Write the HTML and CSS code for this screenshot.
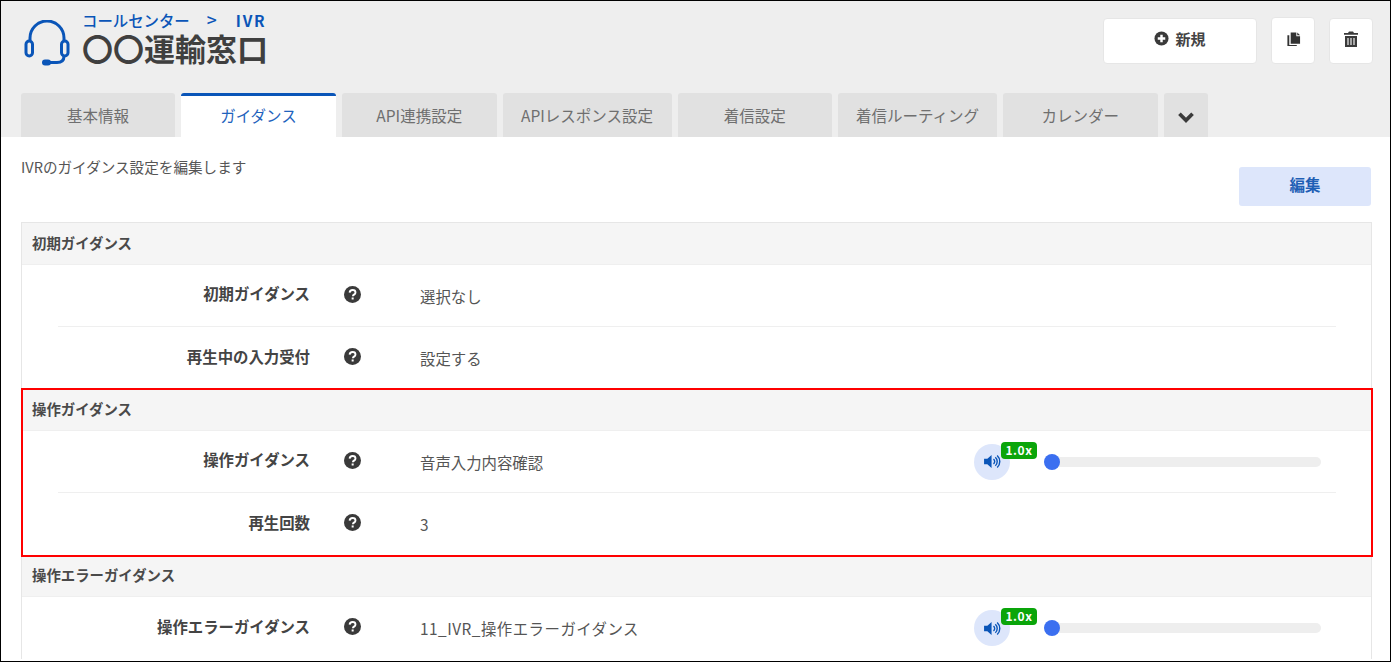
FILE: index.html
```html
<!DOCTYPE html>
<html lang="ja">
<head>
<meta charset="utf-8">
<title>IVR</title>
<link rel="stylesheet" href="styles.css">
</head>
<body>
<div class="frame">
  <header class="top">
    <div class="top-row">
      <div class="brand">
        <svg class="headset" viewBox="0 0 46 46" width="46" height="46" fill="none" stroke="#0a55b8" stroke-width="3">
          <path d="M6 20V18a17 17 0 0 1 34 0v2"/>
          <rect x="2" y="21" width="6.500" height="15" rx="3.200"/>
          <rect x="37.500" y="21" width="6.500" height="15" rx="3.200"/>
          <path d="M40 36c0 5-3 6.500-7 6.500H24"/>
          <rect x="18" y="39.500" width="9" height="6" rx="3" fill="#0a55b8" stroke="none"/>
        </svg>
        <div class="titles">
          <div class="crumb"><span>コールセンター</span><span class="sep">&gt;</span><span class="ivr">IVR</span></div>
          <h1 class="title">〇〇運輸窓口</h1>
        </div>
      </div>
      <div class="actions">
        <button class="btn btn-new">
          <svg viewBox="0 0 16 16" width="15" height="15"><circle cx="8" cy="8" r="7.500" fill="#3a3a3a"/><path d="M8 4v8M4 8h8" stroke="#fff" stroke-width="2.600"/></svg>
          <span>新規</span>
        </button>
        <button class="btn btn-icon btn-copy">
          <svg viewBox="0 0 16 16" width="15" height="16"><path d="M5 1h6v4h4v8H5z" fill="#333"/><path d="M12 1l3 3h-3z" fill="#333"/><path d="M1.500 4H3.500V14.500H11.500V15.500H1.500z" fill="#333"/></svg>
        </button>
        <button class="btn btn-icon">
          <svg viewBox="0 0 14 16" width="14" height="16"><path d="M5 .5h4l1 1.500h4v1.700H0V2h4z" fill="#3a3a3a"/><path d="M1 5h12v11H1z" fill="#3a3a3a"/><path d="M4 7v7M7 7v7M10 7v7" stroke="#eee" stroke-width="1.200"/></svg>
        </button>
      </div>
    </div>
    <nav class="tabs">
      <a class="tab tab-first">基本情報</a>
      <a class="tab active">ガイダンス</a>
      <a class="tab">API連携設定</a>
      <a class="tab tab-wide">APIレスポンス設定</a>
      <a class="tab">着信設定</a>
      <a class="tab tab-route">着信ルーティング</a>
      <a class="tab">カレンダー</a>
      <a class="tab tab-more">
        <svg viewBox="0 0 16 11" width="18" height="12"><path d="M2 2.500l6 6 6-6" fill="none" stroke="#3a3a3a" stroke-width="3.400"/></svg>
      </a>
    </nav>
  </header>

  <main class="content">
    <div class="lead">
      <p class="lead-text">IVRのガイダンス設定を編集します</p>
      <button class="btn-edit">編集</button>
    </div>

    <div class="card">
      <section class="section">
        <h2 class="section-head">初期ガイダンス</h2>
        <div class="row">
          <div class="label">初期ガイダンス</div>
          <div class="help"><svg viewBox="0 0 16 16" width="17" height="17"><use href="#q"/></svg></div>
          <div class="value">選択なし</div>
        </div>
        <div class="row">
          <div class="label">再生中の入力受付</div>
          <div class="help"><svg viewBox="0 0 16 16" width="17" height="17"><use href="#q"/></svg></div>
          <div class="value">設定する</div>
        </div>
      </section>

      <section class="section">
        <h2 class="section-head">操作ガイダンス</h2>
        <div class="row">
          <div class="label">操作ガイダンス</div>
          <div class="help"><svg viewBox="0 0 16 16" width="17" height="17"><use href="#q"/></svg></div>
          <div class="value">音声入力内容確認</div>
          <div class="player">
            <div class="speaker">
              <svg viewBox="0 0 18 16" width="17" height="15"><path d="M0 5h3.500L8 1v14l-4.500-4H0z" fill="#0a55b8"/><path d="M10 5.500a3 3 0 0 1 0 5M12 3.500a6 6 0 0 1 0 9M14 1.500a9 9 0 0 1 0 13" fill="none" stroke="#0a55b8" stroke-width="1.500"/></svg>
              <span class="speed">1.0x</span>
            </div>
            <div class="track"><span class="knob"></span></div>
          </div>
        </div>
        <div class="row">
          <div class="label">再生回数</div>
          <div class="help"><svg viewBox="0 0 16 16" width="17" height="17"><use href="#q"/></svg></div>
          <div class="value">3</div>
        </div>
      </section>

      <section class="section">
        <h2 class="section-head">操作エラーガイダンス</h2>
        <div class="row">
          <div class="label">操作エラーガイダンス</div>
          <div class="help"><svg viewBox="0 0 16 16" width="17" height="17"><use href="#q"/></svg></div>
          <div class="value value-long">11_IVR_操作エラーガイダンス</div>
          <div class="player">
            <div class="speaker">
              <svg viewBox="0 0 18 16" width="17" height="15"><path d="M0 5h3.500L8 1v14l-4.500-4H0z" fill="#0a55b8"/><path d="M10 5.500a3 3 0 0 1 0 5M12 3.500a6 6 0 0 1 0 9M14 1.500a9 9 0 0 1 0 13" fill="none" stroke="#0a55b8" stroke-width="1.500"/></svg>
              <span class="speed">1.0x</span>
            </div>
            <div class="track"><span class="knob"></span></div>
          </div>
        </div>
      </section>
    </div>
  </main>

  <div class="highlight"></div>

  <svg class="defs" width="0" height="0">
    <symbol id="q" viewBox="0 0 16 16">
      <circle cx="8" cy="8" r="8" fill="#3a3a3a"/>
      <path d="M5.300 6.200C5.400 4.600 6.500 3.700 8.100 3.700c1.600 0 2.700 1 2.700 2.300 0 1.100-.6 1.600-1.400 2.100-.7.500-1 .8-1 1.500" fill="none" stroke="#fff" stroke-width="1.800"/>
      <rect x="7.200" y="10.800" width="1.900" height="1.900" fill="#fff"/>
    </symbol>
  </svg>
</div>
</body>
</html>
```

FILE: styles.css
```css
* { box-sizing: border-box; }
html, body { margin: 0; padding: 0; background: #fff; }
body {
  font-family: "Noto Sans CJK JP", "Noto Sans", sans-serif;
  color: #444;
  overflow: hidden;
}
.frame {
  position: relative;
  width: 1391px;
  height: 662px;
  border: 1px solid #000;
  overflow: hidden;
}
.defs { position: absolute; }

.top { background: #eee; height: 136px; padding: 0 17px 0 20px; display: flex; flex-direction: column; }
.top-row { display: flex; justify-content: space-between; height: 92px; }
.brand { display: flex; align-items: flex-start; gap: 12px; padding-top: 19px; padding-left: 3px; }
.titles { margin-top: -11px; }
.crumb { display: flex; font-size: 15.400px; line-height: 22px; font-weight: 500; color: #0a55b8; height: 20px; }
.sep { margin: 0 19px 0 17px; font-size: 17.500px; }
.ivr { font-weight: 700; font-size: 15.500px; letter-spacing: 1.800px; }
.title {
  margin: 2px 0 0; font-family: "Liberation Sans", "Noto Sans CJK JP", sans-serif;
  font-size: 31px; line-height: 40px; font-weight: 700; color: #3f3f3f; white-space: nowrap;
}

.actions { display: flex; gap: 14px; padding-top: 17px; align-items: flex-start; }
.btn {
  display: flex; align-items: center; justify-content: center; gap: 6px;
  height: 46px; background: #fff; border: 1px solid #e6e6e6; border-radius: 4px;
  font: 700 15px "Noto Sans CJK JP", sans-serif; color: #444; padding: 0 0 4px;
}
.btn-new { width: 154px; padding-bottom: 6px; }
.btn-icon { width: 44px; }
.btn-copy { margin-top: -1px; height: 47px; padding-bottom: 3px; }

.tabs { display: flex; gap: 6px; height: 44px; }
.tab {
  display: flex; align-items: center; justify-content: center;
  width: 154.500px; height: 44px;
  background: #e1e1e1; color: #6f6f6f; font-size: 15.500px; border-radius: 3px 3px 0 0;
  white-space: nowrap;
}
.tab-first { width: 154px; }
.tab.active { width: 155px; background: #fff; color: #1f63bd; border-top: 3px solid #0a55b8; padding-bottom: 3px; }
.tab-wide { width: 169px; }
.tab-route { width: 159px; }
.tab-more { width: 44px; padding-top: 4px; }

.content { padding: 0 18px 0 20px; }
.lead { display: flex; justify-content: space-between; align-items: flex-start; height: 85px; padding-right: 1px; }
.lead-text { margin: 20px 0 0; font-size: 14.600px; line-height: 20px; color: #555; }
.btn-edit {
  margin: 30px 0 0; width: 132px; height: 39px; background: #dde6fb; border: 0; border-radius: 3px;
  font: 700 15.500px "Noto Sans CJK JP", sans-serif; color: #1f5fb5; padding: 0 0 6px;
}

.card { border: 1px solid #e6e6e6; border-bottom: 0; }
.section-head {
  margin: 0; height: 42px; background: #f5f5f5; border-bottom: 1px solid #efefef;
  font-size: 14.400px; font-weight: 700; line-height: 39px; padding-left: 10px; color: #4a4a4a;
}
.row {
  display: flex; align-items: center; height: 62px; margin: 0 35px 0 36px;
  border-bottom: 1px solid #efefef;
}
.row:last-child { margin: 0; padding: 0 35px 0 36px; border-bottom: 0; }
.label { width: 252px; text-align: right; font-size: 15.400px; font-weight: 700; color: #444; margin-top: -5px; white-space: nowrap; }
.help { width: 84px; padding-left: 34px; display: flex; height: 17px; margin-top: -3px; }
.help svg { display: block; }
.value { margin-left: 26px; font-size: 15.400px; color: #555; flex: 1; min-width: 0; }
.value-long { letter-spacing: .5px; }

.player { display: flex; align-items: center; width: 347px; margin-right: 15px; }
.speaker {
  position: relative; width: 36px; height: 36px; border-radius: 50%; background: #dde6fb;
  display: flex; align-items: center; justify-content: center; margin-right: 35px;
}
.speed {
  position: absolute; left: 27px; top: -2px; width: 36px; height: 17px; border-radius: 4px;
  background: #0aa50a; color: #fff; font-size: 12px; font-weight: 700; line-height: 15px; text-align: center; letter-spacing: .6px;
}
.track {
  position: relative; flex: 1; height: 10px; background: #eee; border-radius: 5px;
}
.knob {
  position: absolute; left: -1px; top: -3px; width: 16px; height: 16px; border-radius: 50%; background: #3b6ff0;
}

.highlight {
  position: absolute; left: 20px; top: 387px; width: 1352px; height: 169px; border: 2px solid #f00;
  pointer-events: none;
}
```
